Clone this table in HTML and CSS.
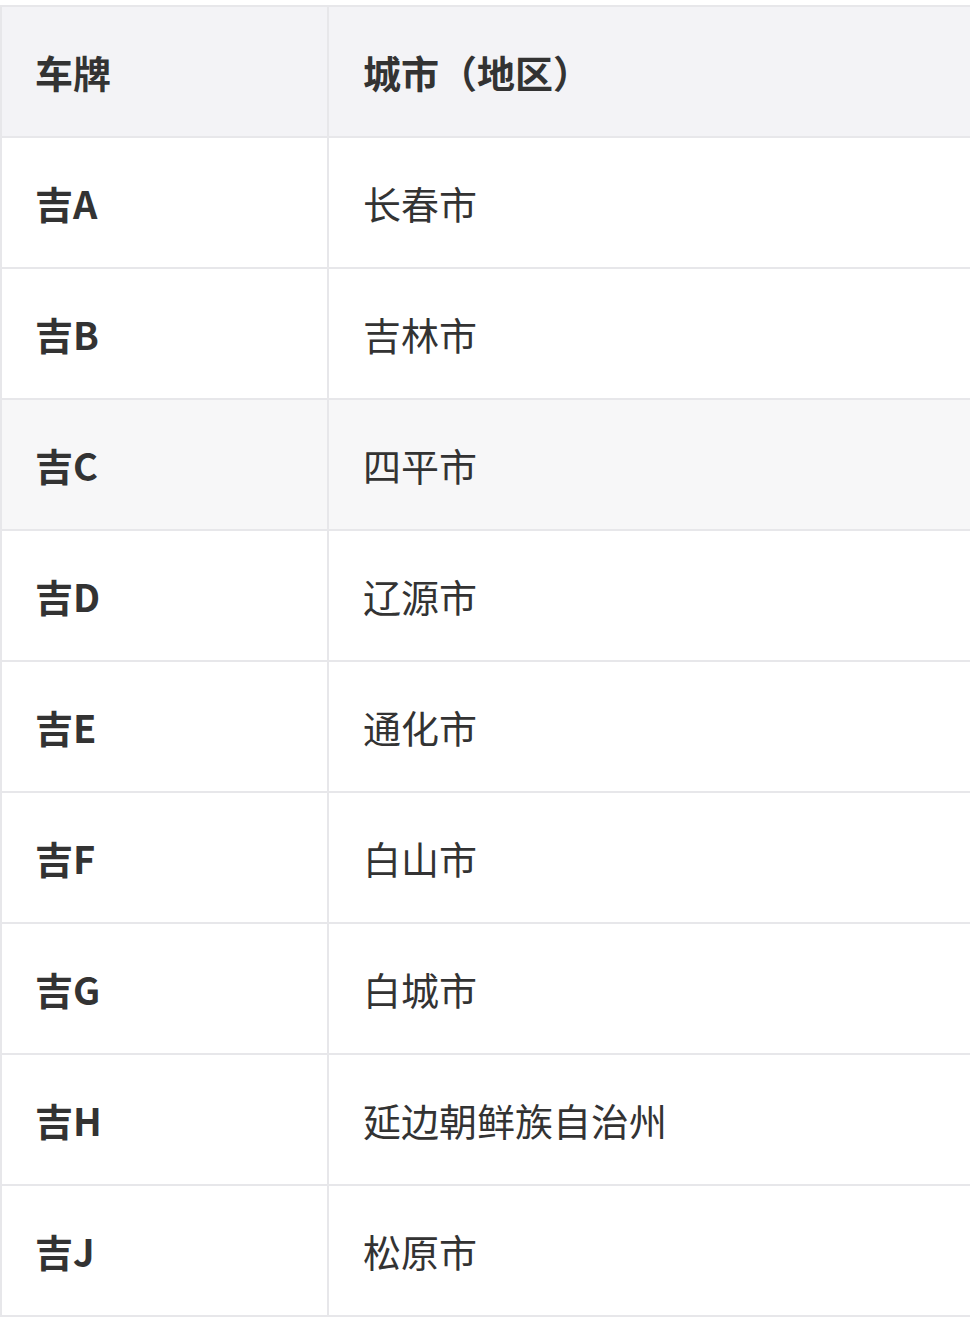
FILE: index.html
```html
<!DOCTYPE html>
<html lang="zh-CN">
<head>
<meta charset="utf-8">
<link rel="stylesheet" href="styles.css">
</head>
<body>
<div class="wrap">
<table class="plates">
  <thead>
    <tr><th class="col-plate">车牌</th><th class="col-city">城市（地区）</th></tr>
  </thead>
  <tbody>
    <tr><td class="col-plate">吉A</td><td class="col-city">长春市</td></tr>
    <tr><td class="col-plate">吉B</td><td class="col-city">吉林市</td></tr>
    <tr class="hover"><td class="col-plate">吉C</td><td class="col-city">四平市</td></tr>
    <tr><td class="col-plate">吉D</td><td class="col-city">辽源市</td></tr>
    <tr><td class="col-plate">吉E</td><td class="col-city">通化市</td></tr>
    <tr><td class="col-plate">吉F</td><td class="col-city">白山市</td></tr>
    <tr><td class="col-plate">吉G</td><td class="col-city">白城市</td></tr>
    <tr><td class="col-plate">吉H</td><td class="col-city">延边朝鲜族自治州</td></tr>
    <tr><td class="col-plate">吉J</td><td class="col-city">松原市</td></tr>
  </tbody>
</table>
</div>
</body>
</html>
```
FILE: styles.css
```css
html, body {
  margin: 0;
  padding: 0;
  background: #ffffff;
  overflow: hidden;
}
.wrap {
  padding-top: 5px;
}
.plates {
  border-collapse: separate;
  border-spacing: 0;
  width: 1000px;
  table-layout: fixed;
  border-top: 2px solid #e7e7ea;
  border-left: 2px solid #e7e7ea;
  font-family: "Noto Sans CJK SC", "Noto Sans", sans-serif;
  font-size: 38px;
  color: #333333;
}
.plates th,
.plates td {
  height: 131px;
  padding: 0 33px;
  text-align: left;
  vertical-align: middle;
  border-right: 2px solid #e7e7ea;
  border-bottom: 2px solid #e7e7ea;
  box-sizing: border-box;
  white-space: nowrap;
}
.plates th {
  background: #f3f3f6;
  font-weight: 700;
}
.plates td.col-plate {
  font-weight: 700;
}
.plates td.col-city {
  font-weight: 400;
}
.col-plate {
  width: 327px;
}
.col-city {
  padding-left: 34px !important;
}
.plates tr.hover td {
  background: #f7f7f8;
}
```
